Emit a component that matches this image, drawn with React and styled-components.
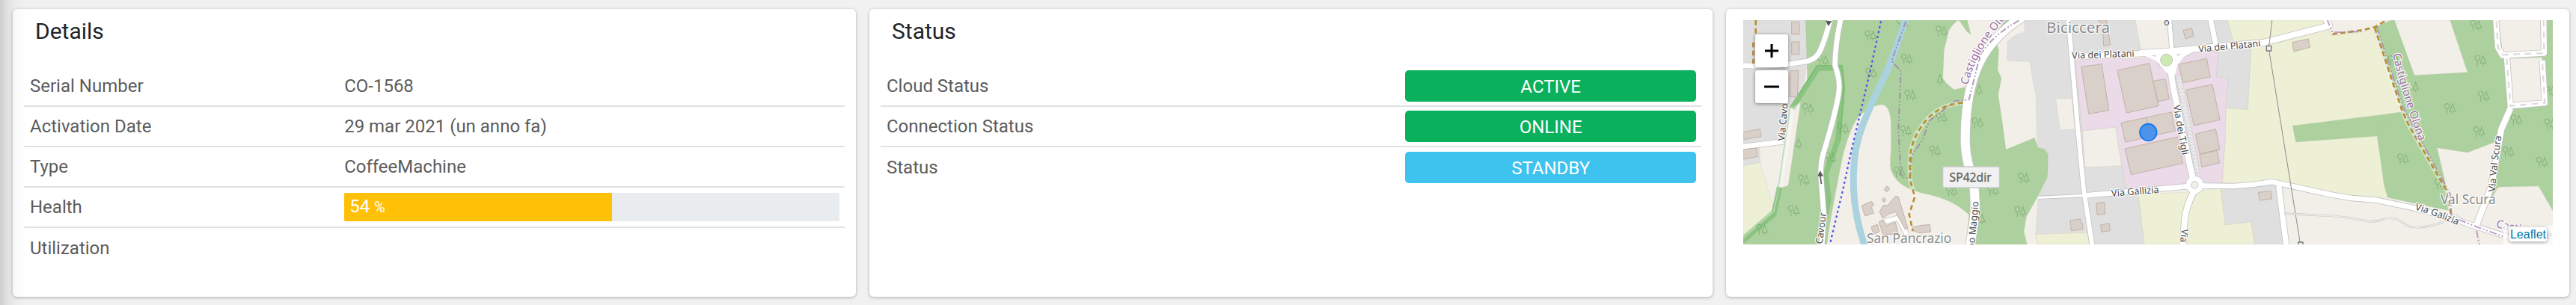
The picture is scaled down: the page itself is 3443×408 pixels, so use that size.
import React from "react";
import styled, { createGlobalStyle } from "styled-components";

const GlobalStyle = createGlobalStyle`
  *, *::before, *::after { box-sizing: border-box; }
  body {
    margin: 0;
    background: #f1f1f1;
    color: #5c5c5c;
    font-family: Roboto, "Liberation Sans", sans-serif;
    font-size: 24px;
    line-height: 36px;
  }
`;

const Page = styled.main`
  position: relative;
  display: grid;
  grid-template-columns: repeat(3, minmax(0, 1fr));
  gap: 18px;
  padding: 12px 9px 11px 17px;
`;

const EdgeShadow = styled.div`
  position: absolute;
  inset: 0 auto 0 0;
  width: 36px;
  pointer-events: none;
  background: linear-gradient(
    to right,
    rgba(0, 0, 0, 0.15),
    rgba(0, 0, 0, 0.06) 30%,
    rgba(0, 0, 0, 0.02) 60%,
    rgba(0, 0, 0, 0)
  );
`;

const Card = styled.section`
  background: #fff;
  border-radius: 6px;
  box-shadow: 0 1px 4px rgba(0, 0, 0, 0.28);
  padding: ${(p) => (p.$map ? "15px 22px 15px 23px" : "12px 15px 38px")};
`;

const Title = styled.h2`
  margin: 0;
  padding: 0 15px 29px;
  color: #212529;
  font-size: 30px;
  font-weight: 400;
  line-height: 36px;
`;

const Table = styled.table`
  width: 100%;
  table-layout: fixed;
  border-spacing: 0;
`;

const Row = styled.tr`
  height: 54px;
  &:not(:last-child) > * {
    border-bottom: 2px solid #dee2e6;
  }
`;

const Label = styled.th`
  width: ${(p) => p.$width};
  padding: 0 8px;
  font-weight: 400;
  text-align: left;
`;

const Value = styled.td`
  padding: 0 7px 0 8px;
`;

const Track = styled.div`
  height: 38px;
  border-radius: 2px;
  background: #e9ecef;
  overflow: hidden;
`;

const Fill = styled.div`
  height: 100%;
  padding-left: 7px;
  background: #ffc107;
  color: #fff;
  small { font-size: 20px; }
`;

const Badge = styled.div`
  height: 42px;
  border-radius: 5px;
  background: ${(p) => p.$color};
  color: #fff;
  line-height: 44px;
  text-align: center;
`;

const MapFrame = styled.div`
  position: relative;
  height: 300px;
  overflow: hidden;
`;

const MapDrawing = styled.svg`
  display: block;
  width: 100%;
  height: 100%;
  font-family: "Noto Sans", sans-serif;
`;

const ZoomControls = styled.div`
  position: absolute;
  top: 19px;
  left: 16px;
  display: grid;
  gap: 4px;
`;

const ZoomButton = styled.button`
  display: grid;
  place-items: center;
  width: 44px;
  height: 44px;
  padding: 0;
  border: 0;
  border-radius: 3px;
  background: #fff;
  box-shadow: 0 1px 5px rgba(0, 0, 0, 0.45);
  cursor: pointer;
`;

const Attribution = styled.div`
  position: absolute;
  right: 0;
  bottom: 0;
  padding: 2px 8px 4px 8px;
  background: rgba(255, 255, 255, 0.7);
  font: 16px/19px "Liberation Sans", Arial, sans-serif;
`;

const AttributionLink = styled.a`
  display: block;
  padding: 0 1px;
  border-radius: 3px;
  background: #fff;
  box-shadow: 0 1px 5px rgba(0, 0, 0, 0.4);
  color: #0078a8;
  text-decoration: none;
`;

const LAND = "#f2efe9";
const WOOD = "#add19e";
const TOWN = "#dfdfdf";
const FARM = "#edf0d5";
const WORKS = "#ebdbe8";

// Each map section has its own horizontal origin in map units.
const WEST = 0;
const MID = 840;
const EAST = 1680;
const FAR = 2529;

const areas = [
  [WEST, TOWN, "M90,81H343L347,230L325,400L275,430L250,570L155,590L157,650L90,665Z"],
  [WEST, FARM, "M90,665L157,652L210,830L205,850L90,955Z"],
  [WEST, WOOD, "M340,81L347,320L283,432L320,410L270,745L235,755L215,850L90,960V981H425C440,870 470,720 490,620C510,550 530,490 560,460C600,430 640,410 660,425C690,450 680,520 683,560C685,600 675,660 682,680C700,740 760,765 830,780C900,795 950,820 995,862L985,981H1228L1215,930L1225,870L1275,780L1310,710L1313,620L1300,600L1270,590L1258,553L1143,600L1130,500L1112,380L1125,315L1110,280L1115,200L1105,175L1215,81Z"],
  [WEST, LAND, "M275,470L320,410L270,745L235,755Z"],
  [MID, LAND, "M90,100L75,120L55,200L50,315L65,335L95,360L140,350L180,250L300,81H148L162,138L145,125L118,85L110,81Z"],
  [MID, TOWN, "M378,81H822L845,205L580,235L610,520L620,672L768,665L785,760L835,790L858,981H432L422,938L433,790L470,710L473,620L465,600L430,590L428,560L423,380L412,330L400,248L307,242L310,165Q340,135 378,130Z"],
  [MID, LAND, "M503,395H568L580,518L520,522Z"],
  [MID, LAND, "M610,525L743,510L767,665L620,672Z"],
  [MID, FARM, "M422,940L630,934L640,981H432Z"],
  [EAST, WORKS, "M-260,235H0L150,200L315,210L307,307L355,312L345,435L343,560L330,735L220,745L-55,760L-72,665L-97,510L-230,525Z"],
  [EAST, TOWN, "M128,81H350L375,165L447,190L433,440L345,433L355,312L307,307L315,210L140,195Z"],
  [EAST, FARM, "M352,81H742L765,145L934,122L1054,450L952,546L985,740L994,800L800,785L530,735L330,745L343,560L345,433L433,440L447,180L375,165Z"],
  [EAST, FARM, "M-5,780L215,770L325,755L342,902L447,890L460,981H18Z"],
  [EAST, TOWN, "M325,755L555,740L590,981H460L447,890L342,902Z"],
  [EAST, WOOD, "M613,505L1054,450L990,560L952,546L625,570Z"],
  [FAR, WOOD, "M88,112L160,81H807V845L750,747L590,750L490,905L390,845L145,793L130,740L103,546L150,457L205,450Z"],
  [FAR, LAND, "M172,81L252,302L465,290L395,81Z"],
  [FAR, LAND, "M343,593L465,612L600,560L560,740L490,905L390,845L375,730Z"],
  [FAR, LAND, "M590,81H765V212H605Z M630,235L765,230L775,412L640,420Z"],
];

const roads = [
  [WEST, 20, "M80,262Q180,270 270,258L350,245Q385,235 400,200Q425,140 440,70"],
  [WEST, 20, "M482,70Q458,180 458,262Q478,320 474,360Q470,420 410,620Q398,660 402,720L413,860L405,990"],
  [WEST, 20, "M80,590L250,568"],
  [WEST, 18, "M660,888L712,874L745,940"],
  [MID, 36, "M390,55Q230,150 180,290Q140,400 140,560Q140,620 158,680Q178,740 178,790Q183,850 170,920L158,995"],
  [MID, 18, "M553,70L590,500L615,760L650,990"],
  [MID, 10, "M433,793L615,785"],
  [MID, 22, "M560,228L870,214"],
  [EAST, 24, "M0,213L130,205L300,188L500,170L760,103L735,60"],
  [EAST, 20, "M-225,785L0,765L220,745L375,747Q460,742 530,730Q650,755 760,780L849,795L949,803L1099,835L1249,875L1349,910L1489,955"],
  [EAST, 20, "M280,60L305,180"],
  [EAST, 16, "M118,70L128,195"],
  [EAST, 24, "M122,270L132,340L165,500L212,715"],
  [EAST, 24, "M220,760Q185,830 180,880L172,990"],
  [EAST, 22, "M557,745L588,990"],
  [EAST, 12, "M20,213Q70,225 90,265M210,205Q160,225 130,262"],
  [FAR, 24, "M637,435L600,520L560,750L500,905"],
  [FAR, 22, "M578,70L587,190L605,222L772,213L770,70M622,225L637,425L775,413L765,243"],
];

const buildings = [
  [WEST, "284,88 315,88 315,138 284,138"],
  [WEST, "284,168 315,168 315,218 284,218"],
  [WEST, "278,284 311,284 307,390 275,388"],
  [WEST, "90,530 157,518 162,548 90,560"],
  [WEST, "90,600 143,594 147,628 90,640"],
  [WEST, "655,762 666,747 678,757 667,770"],
  [WEST, "645,802 653,794 663,802 655,811"],
  [WEST, "565,825 605,808 613,822 604,832 613,855 578,867"],
  [WEST, "636,850 652,824 670,824 700,787 712,790 750,915 740,922 700,850 670,860 650,876"],
  [WEST, "603,910 628,901 636,930 612,940"],
  [WEST, "634,890 650,882 663,905 700,892 712,940 650,940"],
  [WEST, "768,912 800,905 838,901 842,930 800,935 775,928"],
  [MID, "605,268 687,257 716,443 635,457"],
  [MID, "750,283 878,254 915,425 787,453"],
  [MID, "893,325 942,317 958,398 913,408"],
  [MID, "765,493 967,450 982,525 782,570"],
  [MID, "780,597 992,549 1013,655 805,701"],
  [MID, "665,815 697,812 701,858 669,862"],
  [MID, "561,884 602,879 604,895 611,897 611,920 565,926"],
  [MID, "683,902 718,897 721,926 687,931"],
  [MID, "673,81 706,81 722,180 695,184 690,100"],
  [EAST, "155,258 268,235 283,308 173,332"],
  [EAST, "185,361 291,339 321,481 217,504"],
  [EAST, "223,538 304,518 321,600 240,617"],
  [EAST, "240,620 309,604 320,654 248,670"],
  [EAST, "174,122 208,113 216,146 183,156"],
  [EAST, "611,170 676,156 682,190 618,207"],
  [EAST, "475,772 526,767 530,798 481,804"],
];

const trees = [
  [601, 144], [603, 295], [746, 238], [760, 383], [742, 526], [859, 607], [350, 437], [490, 517],
  [410, 243], [440, 634], [333, 724], [293, 846], [166, 922], [885, 126], [716, 692], [728, 95],
  [312, 577, 1], [879, 320, 1], [885, 474],
  [1030, 494], [1215, 716], [1201, 850], [1036, 362, 1], [1048, 880, 1], [1092, 765], [925, 768],
  [3028, 103], [3046, 243], [3059, 387], [2924, 437], [3041, 530], [2736, 639], [3190, 482],
  [3158, 611], [3293, 652], [3325, 499], [2786, 350, 1], [2698, 245], [2885, 740], [3325, 368],
];

const municipalPath = "M970,412Q880,420 825,480Q758,560 758,650V720L778,790";
const hillPath = "M2622,112L2730,440L2760,505L2910,765L2930,870";

function Trees() {
  return (
    <g fill="none" stroke="#8ab57e" strokeWidth="3.5">
      {trees.map(([x, y, single]) => (
        <g key={`${x}-${y}`} transform={`translate(${x} ${y})`}>
          {!single && <path d="M-12,20V0M-12,0C-26,-4 -24,-21 -12,-21S2,-4 -12,0" />}
          <path transform={single ? "translate(-10 0)" : undefined} d="M10,20V12M10,-20L-1,10H21Z" />
        </g>
      ))}
    </g>
  );
}

function MapLabel({ path, size, color = "#4a4a4a", children }) {
  return (
    <text fontSize={size} fill={color} stroke="#fff" strokeOpacity="0.8" strokeWidth="8" strokeLinejoin="round" paintOrder="stroke">
      <textPath href={`#${path}`}>{children}</textPath>
    </text>
  );
}

function AreaMap() {
  return (
    <MapDrawing viewBox="90 81 3246 900" preserveAspectRatio="xMidYMid slice" role="img" aria-label="Map of the machine location">
      <defs>
        <pattern id="parking" width="14" height="14" patternUnits="userSpaceOnUse">
          <path d="M0,0H14V14H0Z" fill="#eee" />
          <path d="M0,3L14,12" stroke="#cfcfcf" strokeWidth="3" />
        </pattern>
        <path id="castiglioneWest" d="M990,342Q1025,200 1150,64L1300,-80" />
        <path id="castiglioneEast" d="M2695,218Q2728,370 2815,610" />
        <path id="castiglioneSouth" d="M3107,912L3400,975" />
        <path id="cavourNorth" d="M256,566L275,340" />
        <path id="cavourSouth" d="M407,980L430,800" />
        <path id="maggio" d="M1016,1000L1038,760" />
        <path id="platani" d="M1408,236L1720,225" />
        <path id="plataniEast" d="M1916,210L2230,180" />
        <path id="gallizia" d="M1567,789L1800,770" />
        <path id="galizia" d="M2783,842Q2870,865 2990,920" />
        <path id="tigli" d="M1815,424Q1830,520 1864,700" />
        <path id="viaSouth" d="M1848,918L1838,1010" />
        <path id="valScuraRoad" d="M3105,770Q3112,650 3140,480" />
      </defs>

      <rect x="0" y="0" width="3500" height="1000" fill={LAND} />
      {areas.map(([x, fill, d]) => (
        <path key={x + d} transform={`translate(${x} 0)`} d={d} fill={fill} stroke="#b9b9a5" strokeOpacity="0.35" strokeWidth="2" />
      ))}
      <Trees />

      <g fill="none">
        <path d="M742,70Q690,240 650,320Q600,420 570,500Q530,600 532,720Q530,850 578,990" stroke="#aad3df" strokeWidth="27" />
        <path d="M285,435L235,750" stroke="#fff" strokeOpacity="0.4" strokeWidth="22" />
        <path d="M80,972L212,860L235,750" stroke="#5cb258" strokeOpacity="0.42" strokeWidth="22" />
        <path d="M285,435L390,273H478L487,350L470,560L420,700L432,800L420,860" stroke="#5cb258" strokeOpacity="0.42" strokeWidth="22" />
        <path d="M80,955L208,845L232,740L278,430L388,263H486L495,350L478,560" stroke="#5cb258" strokeOpacity="0.4" strokeWidth="5" />
        <path d={`${municipalPath} ${hillPath}`} stroke="#fff" strokeOpacity="0.4" strokeWidth="18" />
      </g>

      {roads.map(([x, w, d]) => (
        <path key={x + d} transform={`translate(${x} 0)`} d={d} fill="none" stroke="#c3c3c3" strokeWidth={w + 5} strokeLinejoin="round" />
      ))}
      <circle cx="1900" cy="742" r="37" fill="#c3c3c3" />
      <path d="M1700,203L1895,200Q1826,240 1822,300L1785,290Q1750,235 1700,226Z" fill="#fff" />
      {roads.map(([x, w, d]) => (
        <path key={x + d} transform={`translate(${x} 0)`} d={d} fill="none" stroke="#fff" strokeWidth={w} strokeLinejoin="round" />
      ))}
      <circle cx="1900" cy="742" r="35" fill="#fff" />
      <circle cx="1900" cy="742" r="14" fill={LAND} stroke="#c3c3c3" strokeWidth="3" />
      <circle cx="1787" cy="241" r="24" fill="#cdebb0" stroke="#c3c3c3" strokeWidth="3" />
      <path d="M1724,221H1747L1742,229ZM1828,217H1846L1832,225Z" fill="#d4d4d4" />
      <path d="M1824,306L1846,304L1922,690L1903,694Z" fill="url(#parking)" stroke="#c9c9c9" strokeWidth="2" />

      {buildings.map(([x, points]) => (
        <polygon key={x + points} transform={`translate(${x} 0)`} points={points} fill="#d9d0c9" stroke="#c3b1a6" strokeWidth="3" />
      ))}
      <path d="M1707,473L1718,540" stroke="#c3b1a6" strokeWidth="3" />

      <g fill="none">
        <path d="M642,85L600,280L560,450L520,620L490,760L438,978" stroke="#5353f0" strokeWidth="7" strokeDasharray="9 11" />
        <path d="M742,85L685,245L722,285L712,520L722,700L735,714H760L765,625L810,560L835,485L940,405L995,400L1040,220Q1100,130 1210,75" stroke="#a084a8" strokeOpacity="0.8" strokeWidth="6" strokeDasharray="26 8 6 8 6 8" />
        <g stroke="#b8902f" strokeWidth="8" strokeDasharray="20 13">
          <path d={`${municipalPath}L755,860L770,928`} />
          <path d="M140,81V140M130,170V262" />
          <path d="M2452,138L2576,120L2624,108L2680,75" />
          <path d={hillPath} />
        </g>
        <path d="M2430,75L2452,130L2576,126M2630,108L2735,430L2925,780L2930,870L3030,910L3140,950M3030,925L3042,985" stroke="#a77baf" strokeOpacity="0.7" strokeWidth="6" strokeDasharray="30 8 6 8 6 8" />
        <path d="M2211,75L2197,195L2323,975" stroke="#8c8c8c" strokeWidth="3" />
        <path d="M2188,185h19v19h-19ZM2315,972h19v19h-19Z" fill="#eee" stroke="#777" strokeWidth="4" />
        <path d="M2258,857L2460,867Q2540,875 2580,885T2660,880T2740,898T2900,890" stroke="#c4c4c4" strokeWidth="8" />
        <path d="M2258,857L2460,867Q2540,875 2580,885T2660,880T2740,898T2900,890" stroke={LAND} strokeWidth="4" />
        <path d="M3110,85L3116,190L3134,220L3301,213L3299,80M3151,235L3166,425L3304,413L3294,250" stroke="#dcdcdc" strokeWidth="7" strokeDasharray="26 20" />
        <path d="M403,738L398,700" stroke="#555" strokeWidth="5" />
      </g>
      <path d="M388,707L398,685L411,707ZM421,83L445,85L431,105Z" fill="#555" />

      <MapLabel path="castiglioneWest" size={44} color="#9a6fa3">Castiglione Olona</MapLabel>
      <MapLabel path="castiglioneEast" size={44} color="#9a6fa3">Castiglione Olona</MapLabel>
      <MapLabel path="castiglioneSouth" size={44} color="#9a6fa3">Castiglione</MapLabel>
      <MapLabel path="cavourNorth" size={38}>Via Cavour</MapLabel>
      <MapLabel path="cavourSouth" size={38}>Cavour</MapLabel>
      <MapLabel path="maggio" size={38}>no Maggio</MapLabel>
      <MapLabel path="platani" size={38}>Via dei Platani</MapLabel>
      <MapLabel path="plataniEast" size={38}>Via dei Platani</MapLabel>
      <MapLabel path="gallizia" size={38}>Via Gallizia</MapLabel>
      <MapLabel path="galizia" size={38}>Via Galizia</MapLabel>
      <MapLabel path="tigli" size={38}>Via dei Tigli</MapLabel>
      <MapLabel path="viaSouth" size={38}>Via</MapLabel>
      <MapLabel path="valScuraRoad" size={38}>Via Val Scura</MapLabel>

      <g fill="#8b8b8b" stroke="#fff" strokeOpacity="0.8" strokeWidth="8" strokeLinejoin="round" paintOrder="stroke">
        <text x="1305" y="133" fontSize="62">Biciccera</text>
        <text x="585" y="976" fontSize="52">San Pancrazio</text>
        <text x="2886" y="818" fontSize="52">Val Scura</text>
        <text x="1776" y="103" fontSize="38" fill="#4a4a4a">o</text>
      </g>
      <rect x="890" y="669" width="227" height="84" rx="5" fill="#f1f1f1" stroke="#c8c8c8" strokeWidth="4" />
      <text x="1001" y="730" fontSize="47" fill="#65655c" stroke="#65655c" strokeWidth="1" textAnchor="middle">SP42dir</text>

      <circle cx="1714" cy="531" r="34" fill="#3388f0" fillOpacity="0.85" stroke="#0f73ee" strokeWidth="5" />
    </MapDrawing>
  );
}

const details = [
  ["Serial Number", "CO-1568"],
  ["Activation Date", "29 mar 2021 (un anno fa)"],
  ["Type", "CoffeeMachine"],
  ["Health", <Health key="health" value={54} />],
  ["Utilization", ""],
];

const statuses = [
  ["Cloud Status", "ACTIVE", "#0ab05b"],
  ["Connection Status", "ONLINE", "#0ab05b"],
  ["Status", "STANDBY", "#3ec2ee"],
];

function Health({ value }) {
  return (
    <Track role="progressbar" aria-label="Health" aria-valuenow={value} aria-valuemin={0} aria-valuemax={100}>
      <Fill style={{ width: `${value}%` }}>
        {value} <small>%</small>
      </Fill>
    </Track>
  );
}

export default function App() {
  return (
    <>
      <GlobalStyle />
      <Page>
        <Card>
          <Title>Details</Title>
          <Table>
            <tbody>
              {details.map(([label, value]) => (
                <Row key={label}>
                  <Label scope="row" $width="38.3%">{label}</Label>
                  <Value>{value}</Value>
                </Row>
              ))}
            </tbody>
          </Table>
        </Card>
        <Card>
          <Title>Status</Title>
          <Table>
            <tbody>
              {statuses.map(([label, value, color]) => (
                <Row key={label}>
                  <Label scope="row" $width="63.2%">{label}</Label>
                  <Value>
                    <Badge $color={color}>{value}</Badge>
                  </Value>
                </Row>
              ))}
            </tbody>
          </Table>
        </Card>
        <Card $map>
          <MapFrame>
            <AreaMap />
            <ZoomControls>
              <ZoomButton type="button" aria-label="Zoom in">
                <svg width="20" height="20" viewBox="0 0 20 20" stroke="#000" strokeWidth="3">
                  <path d="M1 10H19M10 1V19" />
                </svg>
              </ZoomButton>
              <ZoomButton type="button" aria-label="Zoom out">
                <svg width="20" height="20" viewBox="0 0 20 20" stroke="#000" strokeWidth="3">
                  <path d="M0 10H20" />
                </svg>
              </ZoomButton>
            </ZoomControls>
            <Attribution>
              <AttributionLink href="https://leafletjs.com">Leaflet</AttributionLink>
            </Attribution>
          </MapFrame>
        </Card>
        <EdgeShadow />
      </Page>
    </>
  );
}
